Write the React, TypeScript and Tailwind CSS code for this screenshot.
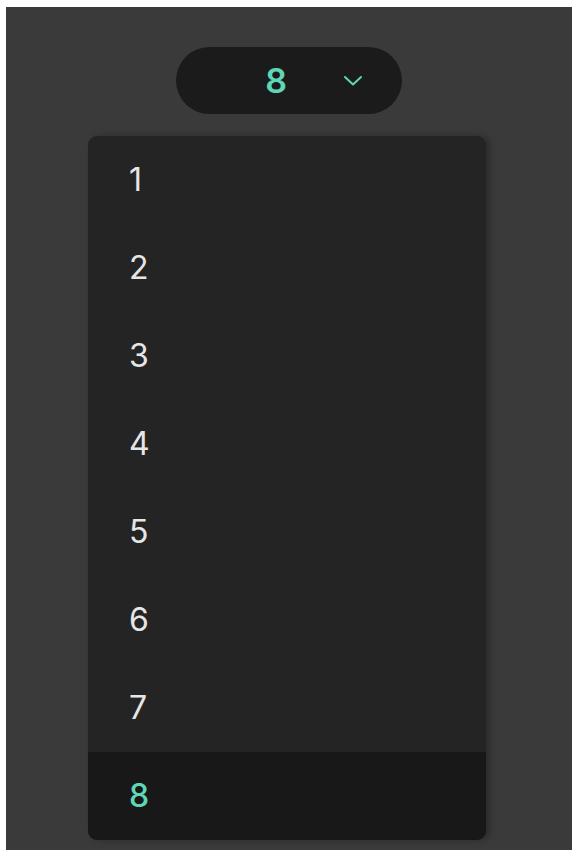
import { useState } from 'react';

const options = [1, 2, 3, 4, 5, 6, 7, 8];

function Chevron() {
  return (
    <svg width="24" height="14" viewBox="0 0 24 14" fill="none" className="text-[#5fd6b6]">
      <path d="M4 3 L12 10.5 L20 3" stroke="currentColor" strokeWidth="2" strokeLinecap="round" strokeLinejoin="round" />
    </svg>
  );
}

export default function App() {
  const [value, setValue] = useState(8);

  return (
    <div className="min-h-[850px] bg-white pt-[7px] pl-[6px] pr-[4px]" style={{ fontFamily: 'Inter, "Noto Sans", sans-serif' }}>
      <div className="flex min-h-[843px] flex-col items-center bg-[#3a3a3a] pt-[40px]">
        <button className="flex h-[67px] w-[226px] items-center justify-end gap-[54px] rounded-full bg-[#1b1b1b] pr-[37px] pl-4">
          <span className="text-[34px] leading-none font-semibold text-[#5fd6b6]">{value}</span>
          <Chevron />
        </button>

        <ul className="mt-[22px] mr-[4px] w-[398px] overflow-hidden rounded-[9px] bg-[#242424] shadow-[4px_0_6px_rgba(0,0,0,0.25)]">
          {options.map((n) => (
            <li key={n}>
              <button
                onClick={() => setValue(n)}
                className={
                  n === value
                    ? 'flex h-[88px] w-full items-center bg-[#181818] pl-[41px] text-[32px] leading-none font-medium text-[#5fd6b6]'
                    : 'flex h-[88px] w-full items-center pl-[41px] text-[32px] leading-none text-[#e6e6e6]'
                }
              >
                {n}
              </button>
            </li>
          ))}
        </ul>
      </div>
    </div>
  );
}
